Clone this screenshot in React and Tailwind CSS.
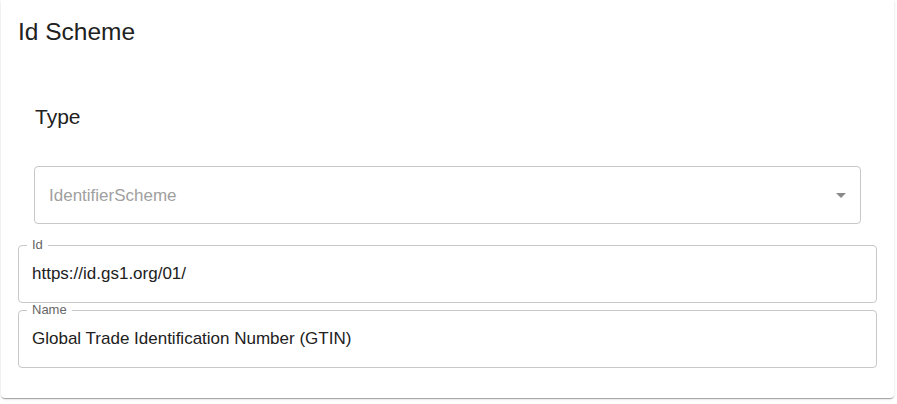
export default function App() {
  return (
    <div className="min-h-screen bg-white pl-[1px] font-['Liberation_Sans',Arial,sans-serif] text-[#212121]">
      <div className="w-[893px] rounded-b-[4px] bg-white px-[17px] pt-4 pb-[30px] shadow-[0_2px_1px_-1px_rgba(0,0,0,0.2),0_1px_1px_0_rgba(0,0,0,0.14),0_1px_3px_0_rgba(0,0,0,0.12)]">
        <h2 className="text-[24.5px] leading-[32px]">Id Scheme</h2>

        <div className="mx-4 mt-[53px]">
          <h3 className="text-[21px] leading-[32px] pl-[1px]">Type</h3>
          <div className="mt-[33px] flex h-[58px] items-center justify-between rounded-[4px] border border-[#c8c8c8] pl-[14px] pr-[7px]">
            <span className="pt-[2px] text-[17px] text-[#a0a0a0]">IdentifierScheme</span>
            <svg viewBox="0 0 24 24" className="h-6 w-6 fill-[#8a8a8a]">
              <path d="M7 10l5 5 5-5z" />
            </svg>
          </div>
        </div>

        <fieldset className="mt-[15px] h-[64px] min-w-0 rounded-[4px] border border-[#c8c8c8] p-0 px-[8px] pb-[18px]">
          <legend className="px-[5px] text-[13px] leading-[12px] text-[#666]">Id</legend>
          <div className="pt-[13px] pl-[5px] text-[17px] leading-[20px]">https://id.gs1.org/01/</div>
        </fieldset>

        <fieldset className="mt-[1px] h-[64px] min-w-0 rounded-[4px] border border-[#c8c8c8] p-0 px-[8px] pb-[18px]">
          <legend className="px-[5px] text-[13px] leading-[12px] text-[#666]">Name</legend>
          <div className="pt-[13px] pl-[5px] text-[17px] leading-[20px]">Global Trade Identification Number (GTIN)</div>
        </fieldset>
      </div>
    </div>
  );
}
